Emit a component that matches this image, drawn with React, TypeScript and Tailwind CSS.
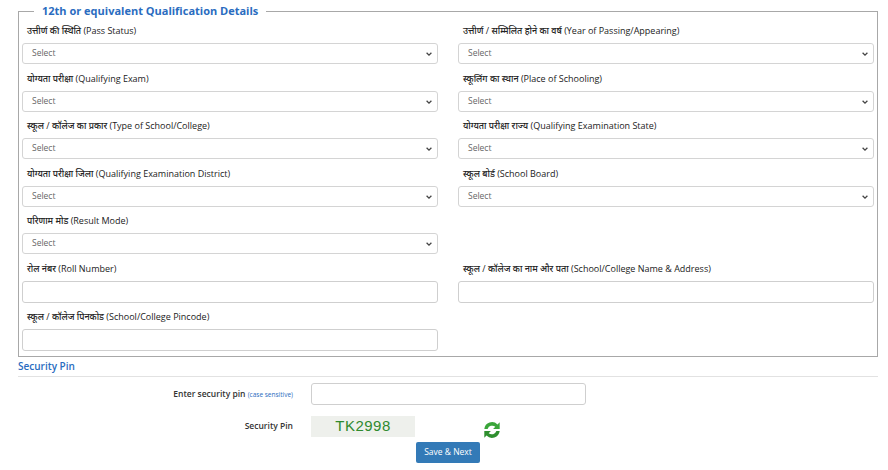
import { FC, ReactElement } from 'react';

const font = { fontFamily: '"Open Sans", "Noto Sans", sans-serif' };

const SelectBox: FC = (): ReactElement => (
  <div className="relative h-[21px] w-full rounded-[3px] border border-[#d4d4d4] bg-white">
    <span className="absolute left-[9px] top-[3px] text-[8.5px] text-[#666]">Select</span>
    <svg className="absolute right-[4px] top-[6px]" width="8" height="8" viewBox="0 0 10 10">
      <path d="M2 3.5 L5 6.5 L8 3.5" fill="none" stroke="#444" strokeWidth="1.6" />
    </svg>
  </div>
);

const TextBox: FC = (): ReactElement => <div className="h-[22px] w-full rounded-[3px] border border-[#cfcfcf] bg-white" />;

const Field: FC<{ label: string; type?: 'select' | 'text' }> = ({ label, type = 'select' }): ReactElement => (
  <div className="flex h-[47.6px] flex-col">
    <label className="mb-[3px] ml-[5px] h-[19px] pt-[3px] text-[9px] font-medium leading-[14px] text-[#222]">{label}</label>
    {type === 'select' ? <SelectBox /> : <TextBox />}
  </div>
);

const App: FC = (): ReactElement => {
  return (
    <div className="h-[470px] w-[888px] bg-white" style={font}>
      <div className="pl-[18px] pr-[10px]">
        <fieldset className="mt-[4px] h-[353px] border border-[#a8a8a8] px-[3px]">
          <legend className="ml-[12px] px-[8px] text-[11px] font-bold leading-[14px] text-[#2a6cc0]">
            12th or equivalent Qualification Details
          </legend>
          <div className="mt-[3px] grid grid-cols-2 gap-x-[20px]">
            <Field label="उत्तीर्ण की स्थिति (Pass Status)" />
            <Field label="उत्तीर्ण / सम्मिलित होने का वर्ष (Year of Passing/Appearing)" />
            <Field label="योग्यता परीक्षा (Qualifying Exam)" />
            <Field label="स्कूलिंग का स्थान (Place of Schooling)" />
            <Field label="स्कूल / कॉलेज का प्रकार (Type of School/College)" />
            <Field label="योग्यता परीक्षा राज्य (Qualifying Examination State)" />
            <Field label="योग्यता परीक्षा जिला (Qualifying Examination District)" />
            <Field label="स्कूल बोर्ड (School Board)" />
            <Field label="परिणाम मोड (Result Mode)" />
            <div />
            <Field label="रोल नंबर (Roll Number)" type="text" />
            <Field label="स्कूल / कॉलेज का नाम और पता (School/College Name & Address)" type="text" />
            <Field label="स्कूल / कॉलेज पिनकोड (School/College Pincode)" type="text" />
          </div>
        </fieldset>
        <div className="mt-[2px] border-b border-[#e2e2e2] pb-[3px] text-[10px] font-semibold leading-[14px] text-[#2a6cc0]">
          Security Pin
        </div>
        <div className="mt-[6px] flex items-center">
          <div className="w-[275px] text-right text-[8.5px] font-semibold text-[#333]">
            Enter security pin <span className="text-[6.5px] font-normal text-[#2a6cc0]">(case sensitive)</span>
          </div>
          <div className="ml-[18px] h-[22px] w-[275px] rounded-[3px] border border-[#cfcfcf]" />
        </div>
        <div className="mt-[6px] flex items-center">
          <div className="w-[275px] text-right text-[8.5px] font-semibold text-[#333]">Security Pin</div>
          <div className="ml-[18px] flex h-[21px] w-[104px] items-center justify-center bg-[#eef0ec] text-[15px] tracking-[0.5px] text-[#2f8a2f]" style={{ fontFamily: '"Liberation Sans", sans-serif' }}>
            TK2998
          </div>
          <svg className="ml-[66px] mt-[8px]" width="22" height="22" viewBox="0 0 20 20">
            <path d="M3 9 A7 7 0 0 1 15 5 L17 3 L17 9 L11 9 L13 7 A4.5 4.5 0 0 0 6 9 Z" fill="#3aa53a" />
            <path d="M17 11 A7 7 0 0 1 5 15 L3 17 L3 11 L9 11 L7 13 A4.5 4.5 0 0 0 14 11 Z" fill="#2f8f2f" />
          </svg>
        </div>
        <div className="ml-[398px] mt-[-4px]">
          <button className="h-[21px] w-[64px] rounded-[2px] bg-[#337ab7] text-[8.5px] text-white">Save &amp; Next</button>
        </div>
      </div>
    </div>
  );
};

export default App;
